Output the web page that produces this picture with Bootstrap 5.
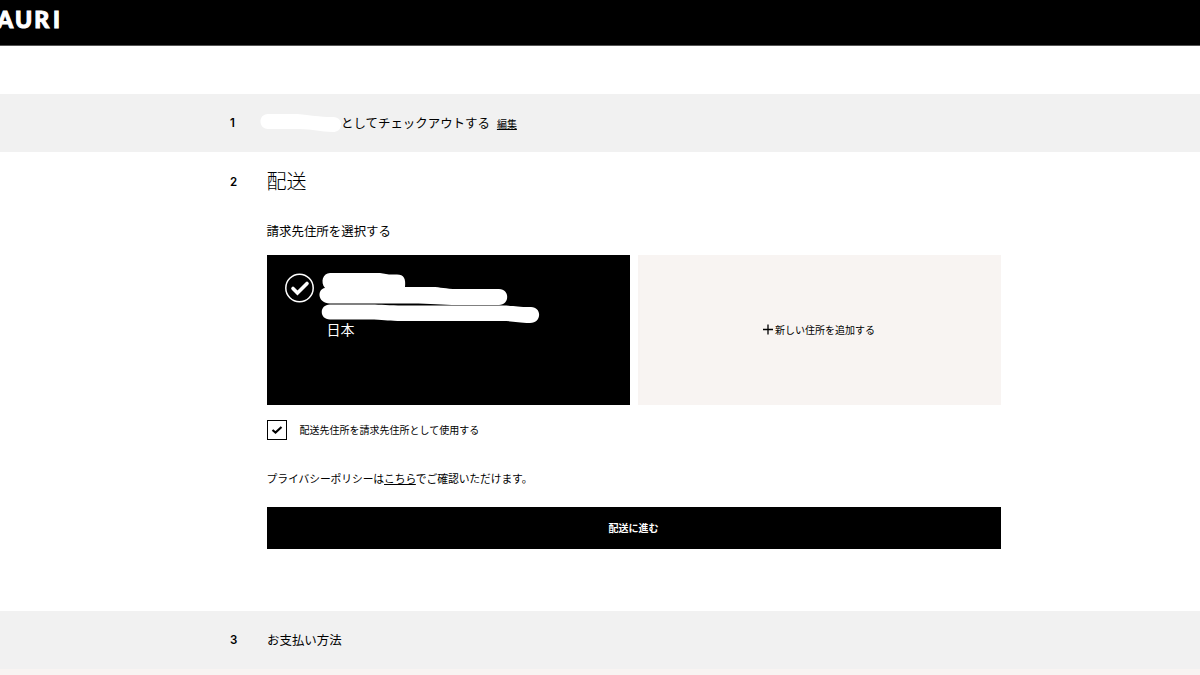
<!DOCTYPE html>
<html lang="ja">
<head>
    <meta charset="UTF-8">
    <meta name="viewport" content="width=device-width, initial-scale=1.0">
    <title>チェックアウト</title>
    <link href="https://cdn.jsdelivr.net/npm/bootstrap@5.3.3/dist/css/bootstrap.min.css" rel="stylesheet">
    <style>
        body {
            font-family: "Liberation Sans", "Noto Sans CJK JP", sans-serif;
            font-size: 12.45px;
            line-height: 20px;
            color: #000;
            background: #fff;
            overflow: hidden;
        }
        .jp { font-family: "Noto Sans CJK JP", sans-serif; font-weight: 400; }
        .site-header { height: 46px; margin-bottom: 48px; border-bottom: 1px solid #555; }
        .site-header svg { display: block; }
        .step { padding-left: 230px; }
        .step-bar { height: 58px; background: #f1f1f1; }
        .step-open { height: 459px; padding-top: 16px; }
        .step-number { width: 37px; flex: none; font-family: Inter, "Liberation Sans", sans-serif; font-size: 11.5px; font-weight: 600; }
        .step-content { width: 734px; margin-left: -.4px; }
        .step-title { font-size: 20px; line-height: 26px; font-weight: 300; }
        .edit-link { font-size: 10px; margin-left: 7px; padding-top: 1px; }
        .name-mask { width: 81px; height: 19px; margin-left: -7px; }
        .address-label { margin-top: 27px; margin-bottom: 14px; }
        .address-box { height: 150px; position: relative; }
        .address-new { background: #f8f4f2; font-size: 10px; }
        .country { position: absolute; left: 60px; top: 64px; font-size: 14px; }
        .same-address { margin-top: 14px; gap: 13px; font-size: 10px; }
        .policy { margin-top: 28px; font-size: 10.8px; letter-spacing: -.1px; }
        .btn-next { height: 42px; margin-top: 19px; padding-bottom: 2px; font-size: 10px; }
        .page-end { height: 6px; background: #f8f4f2; }
    </style>
</head>
<body>
    <header class="site-header bg-black">
        <svg width="64" height="45" fill="#fff" stroke="#fff" stroke-width="1" font-family="Lato, sans-serif" font-weight="900" font-size="23" role="img" aria-label="AURI">
            <text y="28" x="-3 15 34.3 53">AURI</text>
        </svg>
    </header>

    <main>
        <section class="step step-bar d-flex align-items-center">
            <div class="step-number">1</div>
            <svg class="name-mask" viewBox="0 0 82 19" preserveAspectRatio="none" aria-hidden="true">
                <path d="M8 0H38C52 1 58 3 74 3C80 3 82 7 82 10C82 16 78 18 74 18C60 18 55 15 40 15H8C-2 15-2 0 8 0Z" fill="#fff"/>
            </svg>
            <span class="jp">としてチェックアウトする</span>
            <a class="edit-link jp text-reset" href="#">編集</a>
        </section>

        <section class="step step-open d-flex">
            <div class="step-number pt-1">2</div>
            <div class="step-content">
                <h2 class="step-title jp mb-0">配送</h2>
                <div class="address-label jp">請求先住所を選択する</div>

                <div class="row g-2">
                    <div class="col-6">
                        <div class="address-box bg-black text-white">
                            <svg class="d-block" width="280" height="75" fill="none" aria-hidden="true">
                                <circle cx="32.5" cy="33" r="13.7" stroke="#fff" stroke-width="1.5"/>
                                <path d="M26 33.5L30.5 38L40 28.5" stroke="#fff" stroke-width="3.6" stroke-linecap="round"/>
                                <path d="M63 18H113L122 19.5H130C137 19.5 139 24 138 32L165 32C174 32 178 34 190 34H232C243 34 243 50 232 50H190C176 50 163 48.5 145 48.5H63C50 48 50 34 58 33C53 27 56 18 63 18Z" fill="#fff"/>
                                <path d="M63 49.5H108C116 50 128 50.5 140 50.5H235C248 50.5 249 52 264 52C275 52 275 68 263 68C251 68 246 66 235 66H135C122 66 119 65 107 64.5H63C52 64.5 52 49.5 63 49.5Z" fill="#fff"/>
                            </svg>
                            <span class="country jp">日本</span>
                        </div>
                    </div>
                    <div class="col-6">
                        <a class="address-box address-new jp d-flex align-items-center justify-content-center text-reset text-decoration-none" href="#">
                            <svg width="12" height="12" stroke="#000" stroke-width="1.3"><path d="M5 .5V10.5M0 5.5H10"/></svg>
                            新しい住所を追加する
                        </a>
                    </div>
                </div>

                <div class="same-address jp d-flex align-items-center">
                    <svg width="20" height="21" fill="none" role="checkbox" aria-checked="true">
                        <rect x=".5" y="1.5" width="19" height="19" stroke="#000"/>
                        <path d="M5.5 11L8.5 13.5L14.5 8" stroke="#000" stroke-width="2.2"/>
                    </svg>
                    配送先住所を請求先住所として使用する
                </div>

                <div class="policy jp">プライバシーポリシーは<a class="text-reset" href="#">こちら</a>でご確認いただけます。</div>

                <button type="button" class="btn-next jp bg-black text-white border-0 w-100 d-block fw-bold">配送に進む</button>
            </div>
        </section>

        <section class="step step-bar d-flex align-items-center">
            <div class="step-number">3</div>
            <div class="jp">お支払い方法</div>
        </section>
        <div class="page-end"></div>
    </main>

    <script src="https://cdn.jsdelivr.net/npm/bootstrap@5.3.3/dist/js/bootstrap.bundle.min.js"></script>
</body>
</html>
